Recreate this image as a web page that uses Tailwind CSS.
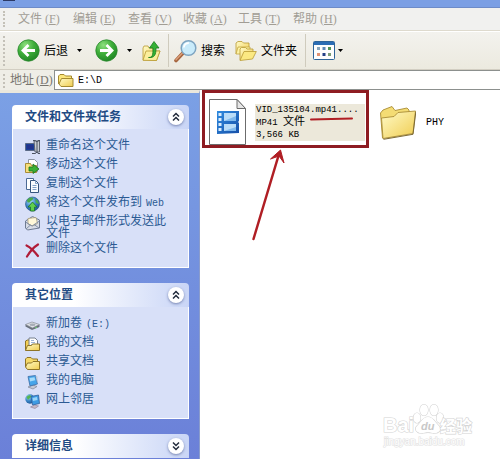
<!DOCTYPE html>
<html lang="zh-CN">
<head>
    <meta charset="UTF-8">
    <meta name="viewport" content="width=device-width, initial-scale=1.0">
    <title>E:\D</title>
    <script src="https://cdn.jsdelivr.net/npm/@tailwindcss/browser@4"></script>
</head>
<body class="flex flex-col h-screen overflow-hidden bg-white text-[12px] leading-3 font-['Liberation_Serif','Noto_Sans_CJK_SC',serif]">
    <!-- 公用渐变 -->
    <svg class="absolute w-0 h-0" aria-hidden="true">
        <defs>
            <radialGradient id="green" cx="0.35" cy="0.25" r="0.8">
                <stop offset="0" stop-color="#8ee07e"/><stop offset="0.5" stop-color="#3fae3a"/><stop offset="1" stop-color="#1f8524"/>
            </radialGradient>
            <linearGradient id="folder" x1="0" y1="0" x2="1" y2="1">
                <stop offset="0" stop-color="#fffbc8"/><stop offset="1" stop-color="#f0cc50"/>
            </linearGradient>
            <linearGradient id="film" x1="0" y1="0" x2="1" y2="1">
                <stop offset="0" stop-color="#2f8be0"/><stop offset="1" stop-color="#164fa8"/>
            </linearGradient>
            <radialGradient id="globe" cx="0.35" cy="0.3" r="0.8">
                <stop offset="0" stop-color="#a8dcf4"/><stop offset="0.5" stop-color="#3a86c8"/><stop offset="1" stop-color="#174f8c"/>
            </radialGradient>
        </defs>
    </svg>

    <div class="h-2 shrink-0 bg-[#7b9fe4] border-b border-[#6d8bc8]">
        <div class="ml-[3px] w-3 h-px bg-[#2c3a66]"></div>
    </div>

    <!-- 菜单栏 -->
    <nav class="flex items-center h-[23px] shrink-0 pl-[3px] bg-[#f1f1ef] border-b border-[#dedace] text-[#a19d95]">
        <span class="w-[2px] h-4 mr-[13px] border-l-2 border-dotted border-[#c4c1b8]"></span>
        <button class="w-[55px] text-left whitespace-nowrap">文件<span class="ml-[3px]">(<u>F</u>)</span></button>
        <button class="w-[55px] text-left whitespace-nowrap">编辑<span class="ml-[3px]">(<u>E</u>)</span></button>
        <button class="w-[55px] text-left whitespace-nowrap">查看<span class="ml-[3px]">(<u>V</u>)</span></button>
        <button class="w-[55px] text-left whitespace-nowrap">收藏<span class="ml-[3px]">(<u>A</u>)</span></button>
        <button class="w-[55px] text-left whitespace-nowrap">工具<span class="ml-[3px]">(<u>T</u>)</span></button>
        <button class="w-[55px] text-left whitespace-nowrap">帮助<span class="ml-[3px]">(<u>H</u>)</span></button>
    </nav>

    <!-- 工具栏 -->
    <div class="flex items-center h-[39px] shrink-0 pl-[3px] bg-linear-to-b from-[#f3f2ee] to-[#eceadf] border-t border-b border-t-white border-b-[#d2cec2] text-black">
        <span class="w-[2px] h-[30px] mr-3 border-l-2 border-dotted border-[#c4c1b8]"></span>
        <button class="flex items-center gap-1">
            <svg class="w-[23px] h-[23px]" viewBox="0 0 23 23">
                <circle cx="11.5" cy="11.5" r="10.7" fill="url(#green)" stroke="#2c8a30" stroke-width="0.8"/>
                <path d="M18 11.5H6.5M11.5 6L6 11.5l5.500 5.500" fill="none" stroke="#fff" stroke-width="2.800"/>
            </svg>
            <span>后退</span>
        </button>
        <button class="w-5 ml-[1px] flex justify-center" aria-label="后退列表"><svg class="w-[5px] h-[3px]" viewBox="0 0 5 3"><path d="M0 0h5L2.500 3z"/></svg></button>
        <button class="ml-1.5" aria-label="前进">
            <svg class="w-[23px] h-[23px]" viewBox="0 0 23 23">
                <circle cx="11.5" cy="11.5" r="10.7" fill="url(#green)" stroke="#2c8a30" stroke-width="0.8"/>
                <path d="M5 11.500h11.500M11.500 6l5.500 5.500-5.500 5.500" fill="none" stroke="#fff" stroke-width="2.800"/>
            </svg>
        </button>
        <button class="w-5 ml-[1px] flex justify-center" aria-label="前进列表"><svg class="w-[5px] h-[3px]" viewBox="0 0 5 3"><path d="M0 0h5L2.500 3z"/></svg></button>
        <button class="ml-[3px]" aria-label="向上">
            <svg class="w-[19px] h-[22px]" viewBox="0 0 19 22">
                <path d="M1 20V8l1-2h4l1 2h4v3h7l-3.500 9.500z" fill="url(#folder)" stroke="#b99a34" stroke-width="0.8"/>
                <path d="M1 20.300L4 11h14l-3.500 9.500z" fill="#fbee9c" stroke="#b99a34" stroke-width="0.800"/>
                <path d="M6.500 17.500c4 0 4.500-2 4.500-9.500H7.500L12 1.500 17 8h-3c0 7-1.500 10-7.500 9.500z" fill="#35b035" stroke="#187c1c" stroke-width="0.800"/>
            </svg>
        </button>
        <span class="w-px h-[33px] ml-[7px] bg-[#cfcbbd]"></span>
        <button class="flex items-center gap-1 ml-[5px]">
            <svg class="w-[23px] h-[24px]" viewBox="0 0 23 24">
                <path d="M2 21.500L9 14" stroke="#a4633c" stroke-width="3.600" stroke-linecap="round"/>
                <path d="M2 20.800L8.500 14" stroke="#dda07a" stroke-width="1.400" stroke-linecap="round"/>
                <circle cx="14.500" cy="9" r="7.300" fill="#c9ebfa" stroke="#7ea4c0" stroke-width="1.500"/>
                <path d="M9.800 8.500a5 5 0 0 1 5-4.500" fill="none" stroke="#fff" stroke-width="1.800"/>
            </svg>
            <span>搜索</span>
        </button>
        <button class="flex items-center gap-1 ml-[10px]">
            <svg class="w-[22px] h-[22px]" viewBox="0 0 22 22">
                <path d="M1 14V3l2-1.500h4L8.500 3H14v4" fill="url(#folder)" stroke="#b99a34" stroke-width="0.8"/>
                <path d="M1 14l2-7h12v7z" fill="#fdf3a6" stroke="#c2a443" stroke-width="0.8"/>
                <path d="M5 20V9l1.500-1.500h4L12 9h6v3" fill="url(#folder)" stroke="#b99a34" stroke-width="0.8"/>
                <path d="M5 20.500L9 11.500h12.300L17.500 19z" fill="#fbe982" stroke="#b99a34" stroke-width="0.8"/>
            </svg>
            <span>文件夹</span>
        </button>
        <span class="w-px h-[33px] ml-[8px] bg-[#cfcbbd]"></span>
        <button class="flex items-center gap-[3px] ml-[7px]" aria-label="查看方式">
            <svg class="w-[22px] h-[19px]" viewBox="0 0 22 19">
                <rect x="0.500" y="0.500" width="21" height="18" rx="1" fill="#fdfdfd" stroke="#2d6398"/>
                <path d="M1 1h20v3H1z" fill="#2a6cb4"/>
                <path d="M4 6h3v3H4z" fill="#88a5bc"/><path d="M9.500 6h3v3h-3z" fill="#5d88b4"/><path d="M15 6h3v3h-3z" fill="#4f9155"/>
                <path d="M4 12h3v3H4z" fill="#e29272"/><path d="M9.500 12h3v3h-3z" fill="#233f86"/><path d="M15 12h3v3h-3z" fill="#7c9c78"/>
            </svg>
            <svg class="w-[5px] h-[3px]" viewBox="0 0 5 3"><path d="M0 0h5L2.500 3z"/></svg>
        </button>
    </div>

    <!-- 地址栏 -->
    <div class="flex h-[20px] shrink-0 pl-[3px] bg-[#efeee7]">
        <span class="w-[2px] h-3.5 mt-1 mr-[5px] border-l-2 border-dotted border-[#c4c1b8]"></span>
        <label for="address" class="w-11 self-center text-[#77756f] whitespace-nowrap">地址<span class="ml-[2px]">(<u>D</u>)</span></label>
        <div class="flex flex-1 items-center gap-1 pl-[3px] bg-white border border-r-0 border-[#8c908e]">
            <svg class="w-4 h-[13px] shrink-0" viewBox="0 0 16 13">
                <path d="M0.500 10V2l1.500-1.500h4L7.500 2h6v3" fill="#fbe67c" stroke="#a58a30"/>
                <path d="M1 10l2 2.500h12V4.500H3.500z" fill="url(#folder)" stroke="#a58a30"/>
            </svg>
            <input id="address" type="text" value="E:\D" class="w-full h-4 text-[10px] text-black outline-none font-['Liberation_Mono',monospace]">
        </div>
    </div>

    <main class="flex flex-1 min-h-0">
        <!-- 任务窗格 -->
        <aside class="w-[200px] shrink-0 overflow-hidden border-t-[3px] border-[#eae7dc] border-r border-r-[#8a9ccc] bg-linear-to-b from-[#7ba0e5] to-[#6b80d8] pt-3 pl-3 pr-[10px] text-[#2b5a93]">
            <section class="mb-[15px]">
                <header class="flex items-center justify-between h-6 pl-[13px] pr-[5px] rounded-t bg-linear-to-r from-white from-35% to-[#c9d5f6]">
                    <h2 class="font-bold text-[#1f4b84]">文件和文件夹任务</h2>
                    <button class="w-4 h-4 rounded-full bg-white shadow-sm shadow-[#7f8db8]" aria-label="收起">
                        <svg class="w-4 h-4" viewBox="0 0 16 16"><path d="M5 7.500l3-3 3 3M5 11.500l3-3 3 3" fill="none" stroke="#222b3c" stroke-width="1.500"/></svg>
                    </button>
                </header>
                <ul class="flex flex-col gap-[3px] pt-[10px] pb-[9px] pl-3 pr-3 bg-[#d8e0f8] border border-t-0 border-white">
                    <li><a href="#" class="flex items-start gap-[6px] min-h-4">
                        <svg class="w-[15px] h-4 shrink-0" viewBox="0 0 15 16">
                            <path d="M0.500 4.500h9v7h-9z" fill="#1b3f98" stroke="#5b6a86"/><path d="M2 6h6v4H2z" fill="#23338c"/>
                            <path d="M9 2h5.500v11H10z" fill="#c7ccd4" stroke="#5d6472"/><path d="M8 1.500h2.500L12 3l1-1.500h2M12 3v10M7 14.500h3.500L12 13l1 1.500h2" fill="none" stroke="#4b5261"/>
                        </svg>
                        <span>重命名这个文件</span></a></li>
                    <li><a href="#" class="flex items-start gap-[6px] min-h-4">
                        <svg class="w-[15px] h-4 shrink-0" viewBox="0 0 15 16">
                            <path d="M3.500 1.500h6l3 3v9h-9z" fill="#fff" stroke="#8b94a4"/>
                            <path d="M0.500 5.500h5l1 2h5v7h-11z" fill="#f6df7c" stroke="#a98c36"/>
                            <path d="M4 9h4V6l6 5-6 4.500V13H4z" fill="#3bb035" stroke="#197220" stroke-width="0.800"/>
                        </svg>
                        <span>移动这个文件</span></a></li>
                    <li><a href="#" class="flex items-start gap-[6px] min-h-4">
                        <svg class="w-[15px] h-4 shrink-0" viewBox="0 0 15 16">
                            <path d="M1.500 1.500h7v11h-7z" fill="#fff" stroke="#4c6a94"/>
                            <path d="M5.500 3.500h5l3 3v9h-8z" fill="#f7fbff" stroke="#35557f"/>
                            <path d="M10.500 3.500v3h3M7.500 8.500h4M7.500 10.500h4M7.500 12.500h4" fill="none" stroke="#7fa0c8"/>
                        </svg>
                        <span>复制这个文件</span></a></li>
                    <li><a href="#" class="flex items-start gap-[6px] min-h-4">
                        <svg class="w-[15px] h-4 shrink-0" viewBox="0 0 15 16">
                            <circle cx="7.500" cy="8" r="7" fill="url(#globe)" stroke="#244f80" stroke-width="0.600"/>
                            <path d="M2 4c2-3 5-3 6-2s-2 3-3 4-3 1-3-2zM10 3c2 0 4 3 4 5l-3-1z" fill="#4ba94b"/>
                            <path d="M7.500 6l4.500 5H9.500v4h-4v-4H3z" fill="#5fcf4c" stroke="#1c7426" stroke-width="0.800"/>
                        </svg>
                        <span>将这个文件发布到<span class="ml-1 text-[10px] font-['Liberation_Mono',monospace]">Web</span></span></a></li>
                    <li><a href="#" class="flex items-start gap-[6px] min-h-4">
                        <svg class="w-[15px] h-4 shrink-0" viewBox="0 0 15 16">
                            <path d="M0.500 6l7-4.500 7 3.500v8l-12 2-2-2z" fill="#d7dce6" stroke="#6f7c92"/>
                            <path d="M3 3.500l8-1 1.500 6-5 2.500-4.500-2z" fill="#fff8d8" stroke="#a69a74" stroke-width="0.700"/>
                            <path d="M0.500 7l6.500 4 7.500-5M1 14l4.500-4M14 13l-5-3.500" fill="none" stroke="#7787a0" stroke-width="0.900"/>
                        </svg>
                        <span>以电子邮件形式发送此文件</span></a></li>
                    <li><a href="#" class="flex items-start gap-[6px] min-h-4">
                        <svg class="w-[15px] h-4 shrink-0" viewBox="0 0 15 16">
                            <path d="M1.500 3.500c4 2 8 6 11.500 10.500" fill="none" stroke="#b01c38" stroke-width="2.200" stroke-linecap="round"/>
                            <path d="M13 2.500C9 5 5 9.500 2 14.500" fill="none" stroke="#b01c38" stroke-width="2.200" stroke-linecap="round"/>
                        </svg>
                        <span>删除这个文件</span></a></li>
                </ul>
            </section>

            <section class="mb-[15px]">
                <header class="flex items-center justify-between h-6 pl-[13px] pr-[5px] rounded-t bg-linear-to-r from-white from-35% to-[#c9d5f6]">
                    <h2 class="font-bold text-[#1f4b84]">其它位置</h2>
                    <button class="w-4 h-4 rounded-full bg-white shadow-sm shadow-[#7f8db8]" aria-label="收起">
                        <svg class="w-4 h-4" viewBox="0 0 16 16"><path d="M5 7.500l3-3 3 3M5 11.500l3-3 3 3" fill="none" stroke="#222b3c" stroke-width="1.500"/></svg>
                    </button>
                </header>
                <ul class="flex flex-col gap-[3px] pt-[10px] pb-[9px] pl-3 pr-3 bg-[#d8e0f8] border border-t-0 border-white">
                    <li><a href="#" class="flex items-start gap-[6px] min-h-4">
                        <svg class="w-[15px] h-4 shrink-0" viewBox="0 0 15 16">
                            <path d="M0.500 7.500v2l6.500 3.500 7.500-3V8z" fill="#69707c"/>
                            <path d="M0.500 7.500L7 5l7.500 2.500L7.500 11z" fill="#dfe2e6" stroke="#878d98" stroke-width="0.700"/>
                            <ellipse cx="7.500" cy="7.700" rx="3" ry="1.200" fill="#a6acb6"/><path d="M10 11l2-.8" stroke="#6fd070"/>
                        </svg>
                        <span>新加卷<span class="ml-1 text-[10px] font-['Liberation_Mono',monospace]">(E:)</span></span></a></li>
                    <li><a href="#" class="flex items-start gap-[6px] min-h-4">
                        <svg class="w-[15px] h-4 shrink-0" viewBox="0 0 15 16">
                            <path d="M0.500 14V5l2-1h3v10z" fill="#f3cf56" stroke="#8e7428"/>
                            <path d="M4 2h6l2.500 2.500V11H4z" fill="#fff" stroke="#77808f"/><path d="M6 4.500h3M6 6.500h4M6 8.500h4" stroke="#9db4d8"/>
                            <path d="M0.500 14.500l2-5h4l1-1.500h7v6.500z" fill="url(#folder)" stroke="#8e7428"/>
                        </svg>
                        <span>我的文档</span></a></li>
                    <li><a href="#" class="flex items-start gap-[6px] min-h-4">
                        <svg class="w-[15px] h-4 shrink-0" viewBox="0 0 15 16">
                            <path d="M0.500 12V4L2 2.500h4L7.500 4h5v2" fill="#f5d96a" stroke="#8e7428"/>
                            <path d="M0.500 12l2 2.500h12v-8H8L6.500 8h-4z" fill="url(#folder)" stroke="#8e7428"/>
                        </svg>
                        <span>共享文档</span></a></li>
                    <li><a href="#" class="flex items-start gap-[6px] min-h-4">
                        <svg class="w-[15px] h-4 shrink-0" viewBox="0 0 15 16">
                            <path d="M3 13l5-2 4 1.500-4 2.500z" fill="#c4c9d6" stroke="#7c8598" stroke-width="0.700"/>
                            <path d="M3 2.500l7.500-1 2 8.500-7.500 2z" fill="#45a5ea" stroke="#3b6ca6" stroke-width="0.800"/>
                            <path d="M4.500 4l5-.7.700 3L5 7.500z" fill="#a5dcfa"/><path d="M10.500 1.500l2 1V10z" fill="#bcc6d6"/>
                        </svg>
                        <span>我的电脑</span></a></li>
                    <li><a href="#" class="flex items-start gap-[6px] min-h-4">
                        <svg class="w-[15px] h-4 shrink-0" viewBox="0 0 15 16">
                            <circle cx="5" cy="6" r="4.700" fill="url(#globe)"/><path d="M1.500 4c2-2 4-2 4.500-1S4 6 3 7z" fill="#55b551"/>
                            <path d="M5.500 14l4-2 4 1-3.500 2.500z" fill="#c4b9c6" stroke="#8c7c98" stroke-width="0.600"/>
                            <path d="M6 3.500l7.500-1.500 1 8.500-7 1.500z" fill="#3d9be4" stroke="#315f9c" stroke-width="0.800"/><path d="M7.500 5l4.500-1 .5 3-4.500 1z" fill="#9ad5f8"/>
                        </svg>
                        <span>网上邻居</span></a></li>
                </ul>
            </section>

            <section>
                <header class="flex items-center justify-between h-6 pl-[13px] pr-[5px] rounded-t bg-linear-to-r from-white from-35% to-[#c9d5f6]">
                    <h2 class="font-bold text-[#1f4b84]">详细信息</h2>
                    <button class="w-4 h-4 rounded-full bg-white shadow-sm shadow-[#7f8db8]" aria-label="展开">
                        <svg class="w-4 h-4" viewBox="0 0 16 16"><path d="M5 4.500l3 3 3-3M5 8.500l3 3 3-3" fill="none" stroke="#222b3c" stroke-width="1.500"/></svg>
                    </button>
                </header>
            </section>
        </aside>

        <!-- 文件列表 -->
        <div class="relative flex flex-1 items-start pl-[9px] pt-[9px] text-black">
            <button class="flex items-center w-[156px] text-left">
                <svg class="w-[37px] h-[46px] shrink-0" viewBox="0 0 37 46">
                    <path d="M0.500 0.500H28l8.500 9v36H0.500z" fill="#fff" stroke="#6c6c6c"/>
                    <path d="M28 0.500v9h8.500z" fill="#e6e6e6" stroke="#6c6c6c"/>
                    <path d="M8 12h22v10l-1 1 1 1v10l-22 1z" fill="url(#film)"/>
                    <path d="M15 14h12v8H15zM15 25h12v7H15z" fill="#b9dcf8"/>
                    <path d="M15 22l12-5v5zM15 32l12-4v4z" fill="#7fb9ee"/>
                    <path d="M9.500 14h3v3h-3zM9.500 19h3v3h-3zM9.500 24h3v3h-3zM9.500 29h3v3h-3z" fill="#d9ecfc"/>
                </svg>
                <span class="flex-1 ml-[9px] pl-[1px] bg-[#ece8da] text-[9px] leading-3 whitespace-nowrap font-['Liberation_Mono','Noto_Sans_CJK_SC',monospace]">
                    <span class="block">VID_135104.mp41....</span>
                    <span class="block">MP41 <span class="text-[11px]">文件</span></span>
                    <span class="block">3,566 KB</span>
                </span>
            </button>
            <button class="flex items-center gap-[10px] mt-1.5 ml-[15px]">
                <svg class="w-[36px] h-[35px]" viewBox="0 0 36 35">
                    <path d="M2.500 33L0.500 8l2.500-3L12 1.500l3 4 12-2.500 2 2v5l-9 20z" fill="#f4dc74" stroke="#a98c36" stroke-width="0.900"/>
                    <path d="M3 33.500l30-5L35.500 6 18 7.500 14 11.500 1.500 13z" fill="url(#folder)" stroke="#a98c36" stroke-width="0.900"/>
                    <path d="M3.500 34.300l29.500-5L35.800 7" fill="none" stroke="#7d6a34" stroke-width="1"/>
                </svg>
                <span class="text-[10px] font-['Liberation_Mono',monospace]">PHY</span>
            </button>

            <!-- 红色标注 -->
            <div class="absolute left-[2px] top-0 w-[167px] h-[58px] border-[3px] border-[#8e1c22]"></div>
            <svg class="absolute left-0 top-0 w-[180px] h-[160px] pointer-events-none" viewBox="0 0 180 160" fill="none" stroke="#b01e24">
                <path d="M111 29.500l41-1" stroke-width="2" stroke-linecap="round"/>
                <path d="M53.500 149L79 64" stroke-width="2.500" stroke-linecap="round"/>
                <path d="M70.500 69L80.500 60l3.500 13-5-7z" fill="#b01e24" stroke-width="1"/>
            </svg>

            <!-- 水印 -->
            <svg class="absolute right-[24px] bottom-[11px] w-[94px] h-[46px]" viewBox="0 0 94 46" fill="#fff" stroke="#d4d4d4" stroke-width="1.200" paint-order="stroke" font-family="Liberation Sans, Noto Sans CJK SC, sans-serif">
                <text x="1" y="30" font-size="20" font-weight="bold">Bai</text>
                <ellipse cx="35" cy="16" rx="3.500" ry="5"/><ellipse cx="42" cy="8" rx="4" ry="5.500"/><ellipse cx="52" cy="8" rx="4" ry="5.500"/><ellipse cx="58" cy="16" rx="3.500" ry="5"/>
                <path d="M46 15c5 0 7 5 10 8 5 4 1 9-5 8-4-1-6-1-10 0-6 1-10-4-5-8 3-3 5-8 10-8z"/>
                <text x="39" y="28" font-size="11" font-weight="bold" font-style="italic" fill="#c8c8c8" stroke="none">du</text>
                <text x="58" y="30" font-size="16" font-weight="bold">经验</text>
                <text x="2" y="43" font-size="10" stroke="#e2e2e2">jingyan.baidu.com</text>
            </svg>
        </div>
    </main>
</body>
</html>
